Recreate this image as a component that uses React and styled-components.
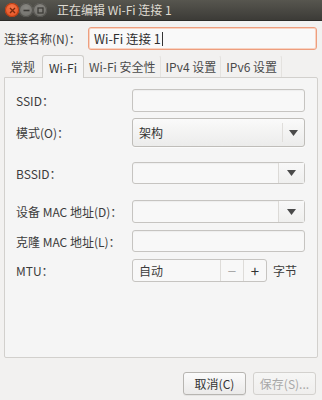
import React from "react";
import styled, { createGlobalStyle } from "styled-components";

const Global = createGlobalStyle`
  html, body { margin: 0; padding: 0; }
  body {
    width: 322px; height: 400px; overflow: hidden;
    font-family: "Noto Sans CJK SC", "Noto Sans", sans-serif;
    font-size: 12px; color: #3c3c3c;
  }
`;

const Window = styled.div`
  width: 322px; height: 400px; background: #f2f1f0;
  display: flex; flex-direction: column; box-sizing: border-box;
`;

const TitleBar = styled.div`
  height: 21px; flex: none;
  background: linear-gradient(#57564f, #3c3b37);
  display: flex; align-items: center; padding-left: 5px;
  border-bottom: 1px solid #2b2a27;
  box-sizing: border-box;
`;

const WinButton = styled.div`
  width: 14px; height: 14px; border-radius: 50%;
  margin-right: 0px;
  background: ${(p) => (p.$close ? "radial-gradient(circle at 50% 35%, #f7774a, #df4a1a)" : "radial-gradient(circle at 50% 35%, #8a8984, #6a6964)")};
  box-shadow: inset 0 0 0 1px ${(p) => (p.$close ? "#b53d14" : "#55544f")};
  display: flex; align-items: center; justify-content: center;
`;

const Title = styled.div`
  margin-left: 10px; color: #dfdbd2; font-size: 12px; line-height: 1;
  white-space: nowrap;
`;

const NameRow = styled.div`
  display: flex; align-items: center;
  padding: 6px 5px 0 4px; height: 23px; flex: none;
`;

const NameLabel = styled.div`
  width: 84px; flex: none; white-space: nowrap;
`;

const NameEntry = styled.div`
  flex: 1; height: 23px; box-sizing: border-box;
  border: 1px solid #ee9e7e; border-radius: 3px;
  box-shadow: inset 0 0 0 1px #f8d3c2;
  background: #f9f9f9;
  display: flex; align-items: center; padding-left: 5px;
  font-size: 12.5px; color: #2e2e2e;
`;

const Caret = styled.span`
  display: inline-block; width: 1px; height: 14px; background: #333; margin-left: 1px;
`;

const Tabs = styled.div`
  display: flex; align-items: flex-end; height: 22px;
  margin: 5px 4px 0 4px; flex: none; position: relative; z-index: 1;
`;

const Tab = styled.div`
  height: ${(p) => (p.$active ? "23px" : "22px")};
  box-sizing: border-box;
  padding: 0 ${(p) => p.$pad || 8}px;
  display: flex; align-items: center; white-space: nowrap;
  color: ${(p) => (p.$active ? "#333" : "#4a4a4a")};
  background: ${(p) => (p.$active ? "#f5f5f5" : "transparent")};
  border: ${(p) => (p.$active ? "1px solid #cfcdca" : "1px solid transparent")};
  border-bottom: none;
  border-radius: 3px 3px 0 0;
  margin-bottom: ${(p) => (p.$active ? "-1px" : "0")};
  border-right: ${(p) => (p.$active ? "1px solid #cfcdca" : p.$sep ? "1px solid #e4e2df" : "1px solid transparent")};
`;

const Panel = styled.div`
  margin: 0 4px; height: 281px; flex: none; box-sizing: border-box;
  background: #f5f5f5; border: 1px solid #d2d0cd; border-radius: 0 2px 2px 2px;
  padding: 11px 12px 0 11px;
  display: grid; grid-template-columns: 116px 173px; align-content: start;
`;

const Label = styled.div`
  display: flex; align-items: center; white-space: nowrap;
  margin-top: ${(p) => p.$mt || 0}px;
`;

const Field = styled.div`
  display: flex; align-items: center;
  margin-top: ${(p) => p.$mt || 0}px;
`;

const Entry = styled.div`
  width: 173px; height: ${(p) => p.$h || 23}px; box-sizing: border-box;
  border: 1px solid #c6c4c1; border-radius: 3px;
  background: #f8f8f8;
  box-shadow: inset 0 1px 1px rgba(0,0,0,0.04);
  display: flex; align-items: stretch;
`;

const EntryText = styled.div`
  flex: 1; display: flex; align-items: center; padding-left: 6px;
`;

const Combo = styled.div`
  width: 173px; height: 29px; box-sizing: border-box;
  border: 1px solid #bfbdb9; border-radius: 3px;
  background: linear-gradient(#fafafa, #ececeb);
  box-shadow: 0 1px 0 rgba(255,255,255,0.6);
  display: flex; align-items: stretch;
`;

const ComboText = styled.div`
  flex: 1; display: flex; align-items: center; padding-left: 6px; color: #333;
`;

const ArrowBox = styled.div`
  width: ${(p) => p.$w || 21}px; flex: none;
  border-left: 1px solid ${(p) => p.$sep || "#e0dedb"};
  display: flex; align-items: center; justify-content: center;
  margin: ${(p) => (p.$inset ? "4px 0" : "0")};
  background: ${(p) => p.$bg || "transparent"};
`;

const Arrow = () => (
  <svg width="9" height="6" viewBox="0 0 9 6"><path d="M0 0 H9 L4.5 6 Z" fill="#4a4a4a" /></svg>
);

const Spin = styled.div`
  width: 135px; height: 23px; box-sizing: border-box;
  border: 1px solid #c6c4c1; border-radius: 3px; background: #f8f8f8;
  display: flex; align-items: stretch;
`;

const SpinBtn = styled.div`
  width: 22px; flex: none; border-left: 1px solid #dedcd9;
  display: flex; align-items: center; justify-content: center;
  color: ${(p) => (p.$dim ? "#a9a9a9" : "#333")};
  font-size: 15px; line-height: 1;
`;

const Unit = styled.div`
  margin-left: 6px; white-space: nowrap;
`;

const Footer = styled.div`
  display: flex; justify-content: flex-end; gap: 7px;
  padding: 14px 6px 0 0;
`;

const Button = styled.div`
  width: 63px; height: 23px; box-sizing: border-box;
  border: 1px solid ${(p) => (p.$disabled ? "#d3d1ce" : "#b7b5b1")};
  border-radius: 3px;
  background: ${(p) => (p.$disabled ? "linear-gradient(#f6f6f5, #efeeed)" : "linear-gradient(#fbfbfb, #ebeae9)")};
  color: ${(p) => (p.$disabled ? "#a8a8a8" : "#333")};
  display: flex; align-items: center; justify-content: center; white-space: nowrap;
  box-shadow: ${(p) => (p.$disabled ? "none" : "0 1px 0 rgba(0,0,0,0.05)")};
`;

export default function App() {
  return (
    <Window>
      <Global />
      <TitleBar>
        <WinButton $close>
          <svg width="7" height="7" viewBox="0 0 7 7"><path d="M1 1 L6 6 M6 1 L1 6" stroke="#7a2a0e" strokeWidth="1.4" /></svg>
        </WinButton>
        <WinButton>
          <svg width="7" height="7" viewBox="0 0 7 7"><path d="M0.5 3.5 H6.5" stroke="#3c3b37" strokeWidth="1.6" /></svg>
        </WinButton>
        <WinButton>
          <svg width="7" height="7" viewBox="0 0 7 7"><rect x="1" y="1" width="5" height="5" fill="none" stroke="#3c3b37" strokeWidth="1.3" /></svg>
        </WinButton>
        <Title>正在编辑 Wi-Fi 连接 1</Title>
      </TitleBar>

      <NameRow>
        <NameLabel>连接名称(N)：</NameLabel>
        <NameEntry>Wi-Fi 连接 1<Caret /></NameEntry>
      </NameRow>

      <Tabs>
        <Tab $pad={6}>常规</Tab>
        <Tab $active $pad={6}>Wi-Fi</Tab>
        <Tab $pad={4} $sep>Wi-Fi 安全性</Tab>
        <Tab $pad={4} $sep>IPv4 设置</Tab>
        <Tab $pad={4} $sep>IPv6 设置</Tab>
      </Tabs>

      <Panel>
        <Label>SSID：</Label>
        <Field><Entry><EntryText /></Entry></Field>

        <Label $mt={6}>模式(O)：</Label>
        <Field $mt={6}>
          <Combo>
            <ComboText>架构</ComboText>
            <ArrowBox $w={21} $inset><Arrow /></ArrowBox>
          </Combo>
        </Field>

        <Label $mt={15}>BSSID：</Label>
        <Field $mt={15}>
          <Entry $h={22}>
            <EntryText />
            <ArrowBox $w={25} $sep="#dcdad7" $bg="linear-gradient(#f8f8f8, #efefee)"><Arrow /></ArrowBox>
          </Entry>
        </Field>

        <Label $mt={16}>设备 MAC 地址(D)：</Label>
        <Field $mt={16}>
          <Entry>
            <EntryText />
            <ArrowBox $w={25} $sep="#dcdad7" $bg="linear-gradient(#f8f8f8, #efefee)"><Arrow /></ArrowBox>
          </Entry>
        </Field>

        <Label $mt={7}>克隆 MAC 地址(L)：</Label>
        <Field $mt={7}><Entry $h={22}><EntryText /></Entry></Field>

        <Label $mt={7}>MTU：</Label>
        <Field $mt={7}>
          <Spin>
            <EntryText>自动</EntryText>
            <SpinBtn $dim>−</SpinBtn>
            <SpinBtn>+</SpinBtn>
          </Spin>
          <Unit>字节</Unit>
        </Field>
      </Panel>

      <Footer>
        <Button>取消(C)</Button>
        <Button $disabled>保存(S)...</Button>
      </Footer>
    </Window>
  );
}
